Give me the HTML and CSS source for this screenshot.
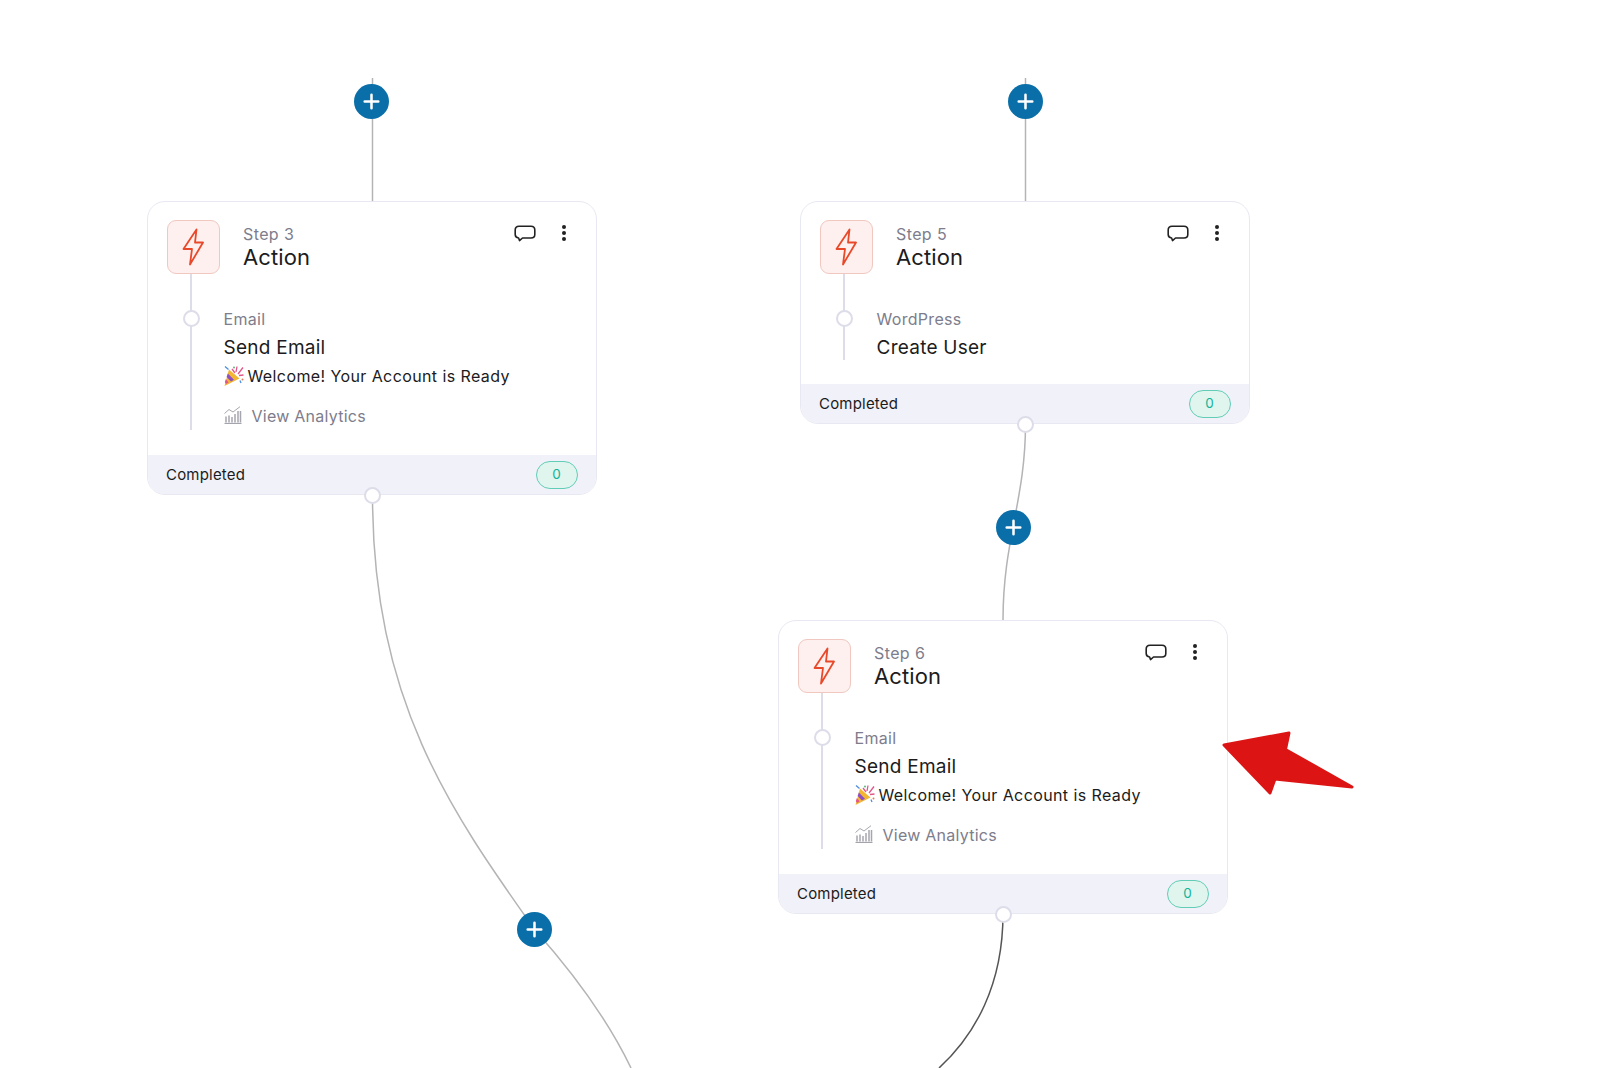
FILE: index.html
```html
<!DOCTYPE html>
<html lang="en">
<head>
  <meta charset="UTF-8" />
  <title>Workflow</title>
  <link rel="stylesheet" href="styles.css">
</head>
<body>
  <svg width="0" height="0" class="defs">
    <defs>
      <symbol id="bolt" viewBox="0 0 24 38">
        <path d="M14.5 1.5 L1.5 21 H10 L8 36.5 L21 14.5 H13 Z" fill="none" stroke="#e8492a" stroke-width="1.8" stroke-linejoin="round"/>
      </symbol>
      <symbol id="comment" viewBox="0 0 22 17">
        <path d="M5 1.2 H17 Q20.8 1.2 20.8 5 V9.5 Q20.8 13 17 13 H8.5 L5.5 15.6 L4.6 13 Q1.2 12.6 1.2 9.5 V5 Q1.2 1.2 5 1.2 Z" fill="none" stroke="#222" stroke-width="1.6" stroke-linejoin="round"/>
      </symbol>
      <symbol id="dots" viewBox="0 0 6 18">
        <circle cx="3" cy="3" r="2"/><circle cx="3" cy="9" r="2"/><circle cx="3" cy="15" r="2"/>
      </symbol>
      <symbol id="popper" viewBox="0 0 20 20">
        <path d="M5 3.5 L15.5 12.5 L0.5 20 Z" fill="#f2b632"/>
        <path d="M3.8 7.4 L10 13.8 L7 15.4 L2.6 11 Z" fill="#8d4fc4"/>
        <path d="M1.9 13 L4.6 16.6 L2 18 L0.8 16 Z" fill="#e2568a"/>
        <path d="M8 3 L11 7 M13 0.5 L12 6 M19 1.5 L14 8 M19.5 9 L15 9.5" stroke="#e2568a" stroke-width="1.3" fill="none"/>
        <path d="M1 0.5 L4.5 3.5 M16 14.5 L17 17" stroke="#4c8fe0" stroke-width="1.3" fill="none"/>
        <circle cx="18.5" cy="13.5" r="1" fill="#e27a56"/><circle cx="10" cy="1.5" r="0.9" fill="#4cb070"/>
      </symbol>
      <symbol id="chart" viewBox="0 0 18 18">
        <path d="M0.5 17.4 H17.5" stroke="#9a9aa4" stroke-width="1" fill="none"/>
        <path d="M2 16.5 V10.5 M5 16.5 V9.5 M8 16.5 V11 M11 16.5 V8 M14 16.5 V5 M16.5 16.5 V5" stroke="#a6a6ae" stroke-width="1.5" fill="none"/>
        <path d="M0.5 7.5 L5 3.5 L9 6 L16 0.7" stroke="#a6a6ae" stroke-width="1" fill="none"/>
      </symbol>
      <symbol id="plus" viewBox="0 0 36 36">
        <circle cx="18" cy="18" r="18" fill="#0a6fa8"/>
        <path d="M18 11 V25 M11 18 H25" stroke="#fff" stroke-width="2.6" stroke-linecap="round"/>
      </symbol>
    </defs>
  </svg>

  <div class="canvas">
    <!-- edges between the steps -->
    <svg class="edges" width="1600" height="1068" viewBox="0 0 1600 1068">
      <path class="edge" d="M372.5 78 V201"/>
      <path class="edge" d="M1025.5 78 V201"/>
      <path class="edge" d="M372.5 495 C372.5 700 450 810 535 930 C575 975 608 1020 631 1068"/>
      <path class="edge" d="M1025.5 424 C1025.5 500 1003 540 1003 620"/>
      <path class="edge edge-dark" d="M1003 914 C1003 985 975 1035 939 1068"/>
    </svg>

    <svg class="add add-1"><use href="#plus"/></svg>
    <svg class="add add-2"><use href="#plus"/></svg>
    <svg class="add add-3"><use href="#plus"/></svg>
    <svg class="add add-4"><use href="#plus"/></svg>

    <div class="node node-3">
      <div class="node-head">
        <div class="node-icon"><svg width="24" height="38"><use href="#bolt"/></svg></div>
        <div class="node-title">
          <div class="step-no">Step 3</div>
          <div class="step-name">Action</div>
        </div>
        <div class="node-tools">
          <svg width="22" height="17"><use href="#comment"/></svg>
          <svg class="tool-dots" width="6" height="18"><use href="#dots"/></svg>
        </div>
      </div>
      <div class="node-body">
        <div class="app-name">Email</div>
        <div class="app-action">Send Email</div>
        <div class="app-subject"><svg width="20" height="20"><use href="#popper"/></svg>Welcome! Your Account is Ready</div>
        <div class="app-analytics"><svg width="18" height="18"><use href="#chart"/></svg>View Analytics</div>
      </div>
      <div class="node-foot">
        <span>Completed</span>
        <span class="count">0</span>
      </div>
      <span class="port"></span>
    </div>

    <div class="node node-5">
      <div class="node-head">
        <div class="node-icon"><svg width="24" height="38"><use href="#bolt"/></svg></div>
        <div class="node-title">
          <div class="step-no">Step 5</div>
          <div class="step-name">Action</div>
        </div>
        <div class="node-tools">
          <svg width="22" height="17"><use href="#comment"/></svg>
          <svg class="tool-dots" width="6" height="18"><use href="#dots"/></svg>
        </div>
      </div>
      <div class="node-body body-short">
        <div class="app-name">WordPress</div>
        <div class="app-action">Create User</div>
      </div>
      <div class="node-foot">
        <span>Completed</span>
        <span class="count">0</span>
      </div>
      <span class="port"></span>
    </div>

    <div class="node node-6">
      <div class="node-head">
        <div class="node-icon"><svg width="24" height="38"><use href="#bolt"/></svg></div>
        <div class="node-title">
          <div class="step-no">Step 6</div>
          <div class="step-name">Action</div>
        </div>
        <div class="node-tools">
          <svg width="22" height="17"><use href="#comment"/></svg>
          <svg class="tool-dots" width="6" height="18"><use href="#dots"/></svg>
        </div>
      </div>
      <div class="node-body">
        <div class="app-name">Email</div>
        <div class="app-action">Send Email</div>
        <div class="app-subject"><svg width="20" height="20"><use href="#popper"/></svg>Welcome! Your Account is Ready</div>
        <div class="app-analytics"><svg width="18" height="18"><use href="#chart"/></svg>View Analytics</div>
      </div>
      <div class="node-foot">
        <span>Completed</span>
        <span class="count">0</span>
      </div>
      <span class="port"></span>
    </div>

    <!-- red pointer drawn over the screenshot -->
    <svg class="pointer" width="140" height="70" viewBox="1220 730 140 70">
      <path d="M1224 745 L1289 733 L1285.5 749.5 L1352 787 L1275 779 L1270 793 Z" fill="#dc1414" stroke="#dc1414" stroke-width="3" stroke-linejoin="round"/>
    </svg>
  </div>
</body>
</html>
```

FILE: styles.css
```css
html, body {
  margin: 0;
  padding: 0;
  background: #fff;
}

body {
  font-family: "Inter", "Liberation Sans", sans-serif;
  color: #1b1b20;
  overflow: hidden;
}

.defs {
  display: block;
  height: 0;
}

.canvas {
  position: relative;
  width: 1600px;
  height: 1068px;
  overflow: hidden;
}

.edges {
  position: absolute;
  left: 0;
  top: 0;
}

.edge {
  fill: none;
  stroke: #b4b4b6;
  stroke-width: 1.5;
}

.edge-dark {
  stroke: #555;
}

.add {
  position: absolute;
  width: 35px;
  height: 35px;
}

.add-1 { left: 354px; top: 84px; }
.add-2 { left: 1007.5px; top: 84px; }
.add-3 { left: 996px; top: 510px; }
.add-4 { left: 517px; top: 912px; }

.node {
  position: absolute;
  width: 449.5px;
  box-sizing: border-box;
  background: #fff;
  border: 1px solid #e8e8f2;
  border-radius: 18px;
}

.node-3 { left: 147px; top: 201px; }
.node-5 { left: 800px; top: 201px; }
.node-6 { left: 778px; top: 620px; }

.node-head {
  display: flex;
  align-items: flex-start;
  padding: 18px 29px 0 19px;
}

.node-icon {
  display: flex;
  align-items: center;
  justify-content: center;
  width: 53px;
  height: 54px;
  box-sizing: border-box;
  background: #fdf0ee;
  border: 1px solid #f0c8c0;
  border-radius: 9px;
}

.node-title {
  flex: 1;
  margin-left: 23px;
  padding-top: 5px;
}

.step-no {
  font-size: 16px;
  line-height: 18px;
  color: #7d7d8c;
  letter-spacing: 0.4px;
}

.step-name {
  font-size: 22px;
  line-height: 28px;
  letter-spacing: 0.1px;
}

.node-tools {
  display: flex;
  align-items: center;
  gap: 25px;
  padding-top: 4px;
}

.node-tools svg {
  fill: #222;
}

.node-body {
  position: relative;
  margin-left: 75.5px;
  padding: 35px 0 27px;
}

/* the timeline beside the body text */
.node-body::before {
  content: "";
  position: absolute;
  left: -33.5px;
  top: 0;
  bottom: 25px;
  width: 2px;
  background: #dddde9;
}

.node-body::after {
  content: "";
  position: absolute;
  left: -41px;
  top: 36px;
  width: 17px;
  height: 17px;
  box-sizing: border-box;
  background: #fff;
  border: 2px solid #dddde9;
  border-radius: 50%;
}

.body-short {
  padding-bottom: 22px;
}

.body-short::before {
  bottom: 24px;
}

.app-name {
  font-size: 16px;
  line-height: 20px;
  color: #7d7d8c;
  letter-spacing: 0.3px;
}

.app-action {
  margin-top: 5px;
  font-size: 19px;
  line-height: 28px;
  letter-spacing: 0.25px;
}

.app-subject {
  display: flex;
  align-items: center;
  gap: 4px;
  height: 26px;
  margin-top: 1px;
  font-size: 16px;
  letter-spacing: 0.4px;
}

.app-analytics {
  display: flex;
  align-items: center;
  gap: 10px;
  height: 24px;
  margin-top: 15px;
  font-size: 16px;
  letter-spacing: 0.25px;
  color: #7d7d8c;
}

.app-analytics svg {
  margin-top: -3px;
}

.node-foot {
  display: flex;
  align-items: center;
  justify-content: space-between;
  height: 39px;
  padding: 0 18px;
  background: #f0f1f9;
  border-radius: 0 0 17px 17px;
  font-size: 15px;
  letter-spacing: 0.2px;
}

.count {
  width: 42px;
  height: 28px;
  box-sizing: border-box;
  background: #dff5ee;
  border: 1.5px solid #62cdb6;
  border-radius: 14px;
  color: #12b398;
  font-size: 13.5px;
  line-height: 25px;
  text-align: center;
  letter-spacing: 0;
}

.port {
  position: absolute;
  left: 215.5px;
  bottom: -10px;
  width: 17px;
  height: 17px;
  box-sizing: border-box;
  background: #fff;
  border: 2px solid #dddde9;
  border-radius: 50%;
}

.pointer {
  position: absolute;
  left: 1220px;
  top: 730px;
}
```
